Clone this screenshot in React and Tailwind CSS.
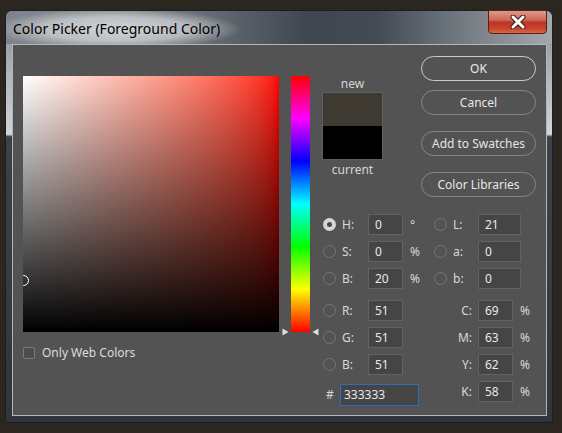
import React from "react";

const leftRows = [
  [
    { label: "H:", value: "0", unit: "°", on: true },
    { label: "S:", value: "0", unit: "%" },
    { label: "B:", value: "20", unit: "%" },
  ],
  [
    { label: "R:", value: "51" },
    { label: "G:", value: "51" },
    { label: "B:", value: "51" },
  ],
];

const labRows = [
  { label: "L:", value: "21" },
  { label: "a:", value: "0" },
  { label: "b:", value: "0" },
];

const cmykRows = [
  { label: "C:", value: "69" },
  { label: "M:", value: "63" },
  { label: "Y:", value: "62" },
  { label: "K:", value: "58" },
];

function Radio({ on }) {
  if (on) {
    return (
      <span className="flex h-[13px] w-[13px] shrink-0 items-center justify-center rounded-full bg-[#d8d8d8]">
        <span className="h-[5px] w-[5px] rounded-full bg-[#4b4b4b]" />
      </span>
    );
  }
  return <span className="block h-[13px] w-[13px] shrink-0 rounded-full border border-[#767676]" />;
}

function Box({ value, width }) {
  return (
    <div className={"flex h-[21px] shrink-0 items-center border border-[#626262] bg-[#454545] pl-[6px] text-[12px] text-[#e8e8e8] " + width}>
      {value}
    </div>
  );
}

function Pill({ children, primary, className = "" }) {
  return (
    <button
      type="button"
      className={
        (primary
          ? "block h-[25px] w-[115px] rounded-full border-[1.5px] border-[#c9c9c9] text-[12px] text-[#ececec] "
          : "block h-[25px] w-[115px] rounded-full border border-[#858585] text-[12px] text-[#e6e6e6] ") + className
      }
    >
      {children}
    </button>
  );
}

export default function App() {
  return (
    <div className="h-[433px] w-[562px] overflow-hidden bg-[#2b2620] pl-[5px] pt-[10px] font-['Noto_Sans','Open_Sans','DejaVu_Sans',sans-serif]">
      <div className="flex h-[413px] w-[548px] flex-col rounded-t-[7px] rounded-b-[3px] border border-[#1b1e21] bg-[linear-gradient(180deg,#868b90_0%,#b3b6b9_16%,#d2d4d6_30%,#3c4249_30.6%,#30363c_100%)]">
        {/* title bar */}
        <div className="flex h-[33px] shrink-0 items-start justify-between rounded-t-[6px] bg-[radial-gradient(ellipse_125px_20px_at_110px_18px,rgba(214,216,218,0.95)_0%,rgba(200,203,206,0.8)_60%,rgba(200,203,206,0)_100%),linear-gradient(90deg,#7d838a_0%,#8a9096_20%,#5f666d_40%,#3f464d_55%,#434a51_68%,#687077_80%,#80868c_88%,#a5a9ad_100%)]">
          <span className="pl-[7px] pt-[8px] text-[14px] leading-[20px] text-black">Color Picker (Foreground Color)</span>
          <div className="-mt-[1px] mr-[5px] flex h-[24px] w-[59px] items-center justify-center rounded-b-[4px] border border-[#5b1f16] bg-[linear-gradient(180deg,#dd9a8d_0%,#cf6a58_40%,#bb3524_52%,#c9452e_80%,#d8664b_100%)]">
            <svg width="18" height="14" viewBox="0 0 18 14">
              <path d="M4 2 L14 12 M14 2 L4 12" stroke="#3b1a14" strokeWidth="5" strokeLinecap="round" />
              <path d="M4 2 L14 12 M14 2 L4 12" stroke="#ffffff" strokeWidth="3" strokeLinecap="round" />
            </svg>
          </div>
        </div>

        {/* client area */}
        <div className="ml-[6px] flex h-[372px] w-[535px] border border-[#b3b7bb] bg-[#535353]">
          {/* colour field */}
          <div className="ml-[10px] flex flex-col pt-[31px]">
            <div className="relative h-[256px] w-[256px] overflow-hidden bg-linear-to-r from-white to-[#ff0000]">
              <div className="absolute inset-0 bg-linear-to-t from-black to-transparent" />
              <div className="absolute left-[-5px] top-[199px] h-[11px] w-[11px] rounded-full border border-white" />
            </div>
            <label className="mt-[12px] flex items-center gap-[7px] text-[12px] text-[#dcdcdc]">
              <span className="h-[12px] w-[12px] rounded-[2px] border border-[#7a7a7a] bg-[#4d4d4d]" />
              Only Web Colors
            </label>
          </div>

          {/* hue slider */}
          <div className="ml-[12px] pt-[31px]">
            <div className="relative h-[256px] w-[19px] bg-[linear-gradient(180deg,#ff0000_0%,#ff00ff_16.67%,#0000ff_33.33%,#00ffff_50%,#00ff00_66.67%,#ffff00_83.33%,#ff0000_100%)]">
              <svg className="absolute left-[-9px] top-[252px]" width="7" height="8" viewBox="0 0 7 8">
                <path d="M0.5 0.5 L6.5 4 L0.5 7.5 Z" fill="#dedede" />
              </svg>
              <svg className="absolute left-[21px] top-[252px]" width="7" height="8" viewBox="0 0 7 8">
                <path d="M6.5 0.5 L0.5 4 L6.5 7.5 Z" fill="#dedede" />
              </svg>
            </div>
          </div>

          {/* right side */}
          <div className="ml-[12px] flex flex-col">
            <div className="flex">
              <div className="flex w-[61px] flex-col items-center pt-[31px] text-[12px] leading-[16px] text-[#d6d6d6]">
                <span>new</span>
                <div className="flex h-[68px] w-[61px] flex-col border border-[#5e5e5e]">
                  <div className="flex-1 bg-[#3e3931]" />
                  <div className="flex-1 bg-black" />
                </div>
                <span className="mt-[2px]">current</span>
              </div>
              <div className="ml-[38px] flex flex-col pt-[11px]">
                <Pill primary>OK</Pill>
                <Pill className="mt-[9px]">Cancel</Pill>
                <Pill className="mt-[16px]">Add to Swatches</Pill>
                <Pill className="mt-[16px]">Color Libraries</Pill>
              </div>
            </div>

            <div className="mt-[17px] flex text-[12px] text-[#d8d8d8]">
              {/* HSB / RGB / hex */}
              <div className="flex w-[112px] flex-col">
                {leftRows.map((group, gi) => (
                  <div key={gi} className={gi ? "mt-[11px] flex flex-col gap-[6px]" : "flex flex-col gap-[6px]"}>
                    {group.map((r) => (
                      <div key={r.label + r.value + gi} className="flex h-[21px] items-center">
                        <span className="ml-[1px] flex">
                          <Radio on={r.on} />
                        </span>
                        <span className="w-[32px] pl-[6px]">{r.label}</span>
                        <Box value={r.value} width="w-[35px]" />
                        {r.unit && <span className="ml-[7px]">{r.unit}</span>}
                      </div>
                    ))}
                  </div>
                ))}
                <div className="mt-[9px] flex h-[21px] items-center">
                  <span className="w-[18px] pl-[4px]">#</span>
                  <div className="flex h-[22px] w-[79px] items-center border border-[#2f6fba] bg-[#454545] pl-[3px] text-[12px] text-[#e8e8e8]">
                    333333
                  </div>
                </div>
              </div>

              {/* Lab / CMYK */}
              <div className="flex flex-col">
                <div className="flex flex-col gap-[6px]">
                  {labRows.map((r) => (
                    <div key={r.label} className="flex h-[21px] items-center">
                      <Radio />
                      <span className="w-[31px] pl-[6px]">{r.label}</span>
                      <Box value={r.value} width="w-[43px]" />
                    </div>
                  ))}
                </div>
                <div className="mt-[11px] flex flex-col gap-[6px]">
                  {cmykRows.map((r) => (
                    <div key={r.label} className="flex h-[21px] items-center">
                      <span className="w-[13px]" />
                      <span className="w-[31px] pr-[6px] text-right">{r.label}</span>
                      <Box value={r.value} width="w-[35px]" />
                      <span className="ml-[7px]">%</span>
                    </div>
                  ))}
                </div>
              </div>
            </div>
          </div>
        </div>
      </div>
    </div>
  );
}
